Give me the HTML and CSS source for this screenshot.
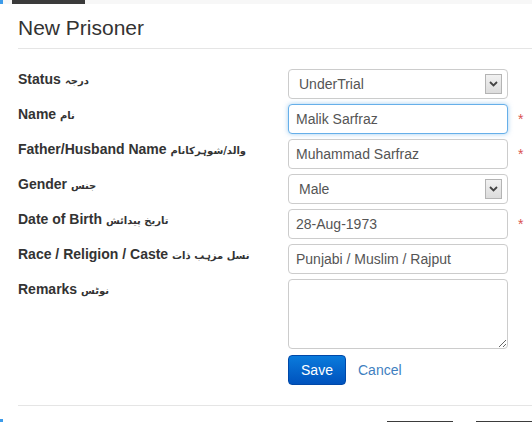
FILE: index.html
```html
<!DOCTYPE html>
<html>
<head>
<meta charset="utf-8">
<link rel="stylesheet" href="styles.css">
</head>
<body>
<div class="topbar"><span class="mark"></span><span class="tab"></span></div>
<div class="panel">
  <h1 class="title">New Prisoner</h1>
  <form class="form">
    <label class="lbl">Status <span class="ur">درجہ</span></label>
    <div class="select"><span class="sel-text">UnderTrial</span><span class="arrow"><svg width="9" height="6" viewBox="0 0 9 6"><path d="M1 1 L4.5 4.5 L8 1" fill="none" stroke="#444" stroke-width="1.8"/></svg></span></div>
    <span class="req"></span>

    <label class="lbl">Name <span class="ur">نام</span></label>
    <input class="inp focus" type="text" value="Malik Sarfraz">
    <span class="req">*</span>

    <label class="lbl">Father/Husband Name <span class="ur">والد/شوہرکانام</span></label>
    <input class="inp" type="text" value="Muhammad Sarfraz">
    <span class="req">*</span>

    <label class="lbl">Gender <span class="ur">جنس</span></label>
    <div class="select"><span class="sel-text">Male</span><span class="arrow"><svg width="9" height="6" viewBox="0 0 9 6"><path d="M1 1 L4.5 4.5 L8 1" fill="none" stroke="#444" stroke-width="1.8"/></svg></span></div>
    <span class="req"></span>

    <label class="lbl">Date of Birth <span class="ur">تاریخ پیدائش</span></label>
    <input class="inp" type="text" value="28-Aug-1973">
    <span class="req">*</span>

    <label class="lbl">Race / Religion / Caste <span class="ur">نسل مزہب ذات</span></label>
    <input class="inp" type="text" value="Punjabi / Muslim / Rajput">
    <span class="req"></span>

    <label class="lbl">Remarks <span class="ur">نوٹس</span></label>
    <textarea class="area"></textarea>
    <span class="req"></span>

    <span class="lbl"></span>
    <div class="actions"><button type="button" class="btn-save">Save</button><a class="cancel">Cancel</a></div>
    <span class="req"></span>
  </form>
  <div class="foot-line"></div>
</div>
<div class="bottombar"><span class="mark"></span><span class="spacer"></span><span class="bbtn one"></span><span class="bbtn two"></span></div>
</body>
</html>
```
FILE: styles.css
```css
html, body {
  margin: 0;
  padding: 0;
  background: #fff;
  width: 532px;
  height: 422px;
  overflow: hidden;
  font-family: "Liberation Sans", Arial, sans-serif;
  color: #333;
}
.topbar {
  height: 4px;
  display: flex;
  background: #f7f7f7;
}
.topbar .mark {
  width: 3px;
  height: 4px;
  background: #3d9be9;
}
.topbar .tab {
  margin-left: 9px;
  width: 73px;
  height: 4px;
  background: #3b3b3b;
}
.panel {
  padding-left: 18px;
}
.title {
  margin: 12px 0 0 0;
  font-size: 21px;
  line-height: 24px;
  font-weight: normal;
  color: #333;
  padding-bottom: 8px;
  border-bottom: 1px solid #e5e5e5;
}
.form {
  margin-top: 20px;
  display: grid;
  grid-template-columns: 270px 220px 1fr;
  row-gap: 5px;
  align-items: start;
}
.lbl {
  font-weight: bold;
  font-size: 14px;
  line-height: 20px;
  color: #333;
  white-space: nowrap;
}
.ur {
  font-family: "DejaVu Sans", sans-serif;
  font-size: 10px;
  font-weight: bold;
}
.select, .inp {
  box-sizing: border-box;
  height: 30px;
  width: 220px;
  border: 1px solid #ccc;
  border-radius: 4px;
  background: #fff;
  font-family: "Liberation Sans", Arial, sans-serif;
  font-size: 14px;
  color: #555;
}
.select {
  display: flex;
  align-items: center;
  justify-content: space-between;
  padding: 0 5px 0 10px;
}
.arrow {
  box-sizing: border-box;
  width: 17px;
  height: 20px;
  border: 1px solid #b4b4b4;
  background: linear-gradient(#f1f1f1, #dcdcdc);
  display: flex;
  align-items: center;
  justify-content: center;
}
.inp {
  padding: 0 7px;
  margin: 0;
  outline: none;
}
.inp.focus {
  border-color: #66afe9;
  box-shadow: 0 0 5px rgba(102, 175, 233, 0.6);
}
.area {
  box-sizing: border-box;
  width: 220px;
  height: 70px;
  margin: 0;
  border: 1px solid #ccc;
  border-radius: 4px;
  resize: both;
}
.req {
  color: #d9534f;
  font-size: 14px;
  line-height: 30px;
  padding-left: 10px;
}
.actions {
  margin-top: 1px;
  display: flex;
  align-items: center;
  gap: 12px;
}
.btn-save {
  box-sizing: border-box;
  width: 58px;
  height: 30px;
  border: 1px solid #0048a8;
  border-radius: 4px;
  background: linear-gradient(#0a7bdc, #0052bd);
  color: #fff;
  font-family: "Liberation Sans", Arial, sans-serif;
  font-size: 14px;
  padding: 0;
}
.cancel {
  color: #3f7fbf;
  font-size: 14px;
}
.foot-line {
  margin-top: 20px;
  height: 1px;
  background: #e5e5e5;
}
.bottombar {
  margin-top: 12px;
  display: flex;
  align-items: flex-end;
  height: 5px;
}
.bottombar .mark {
  width: 3px;
  height: 4px;
  background: #3d9be9;
}
.bottombar .spacer {
  flex: 1;
}
.bbtn {
  height: 2px;
  background: #3b3b3b;
}
.bbtn.one {
  width: 66px;
  margin-right: 23px;
}
.bbtn.two {
  width: 56px;
}
```
